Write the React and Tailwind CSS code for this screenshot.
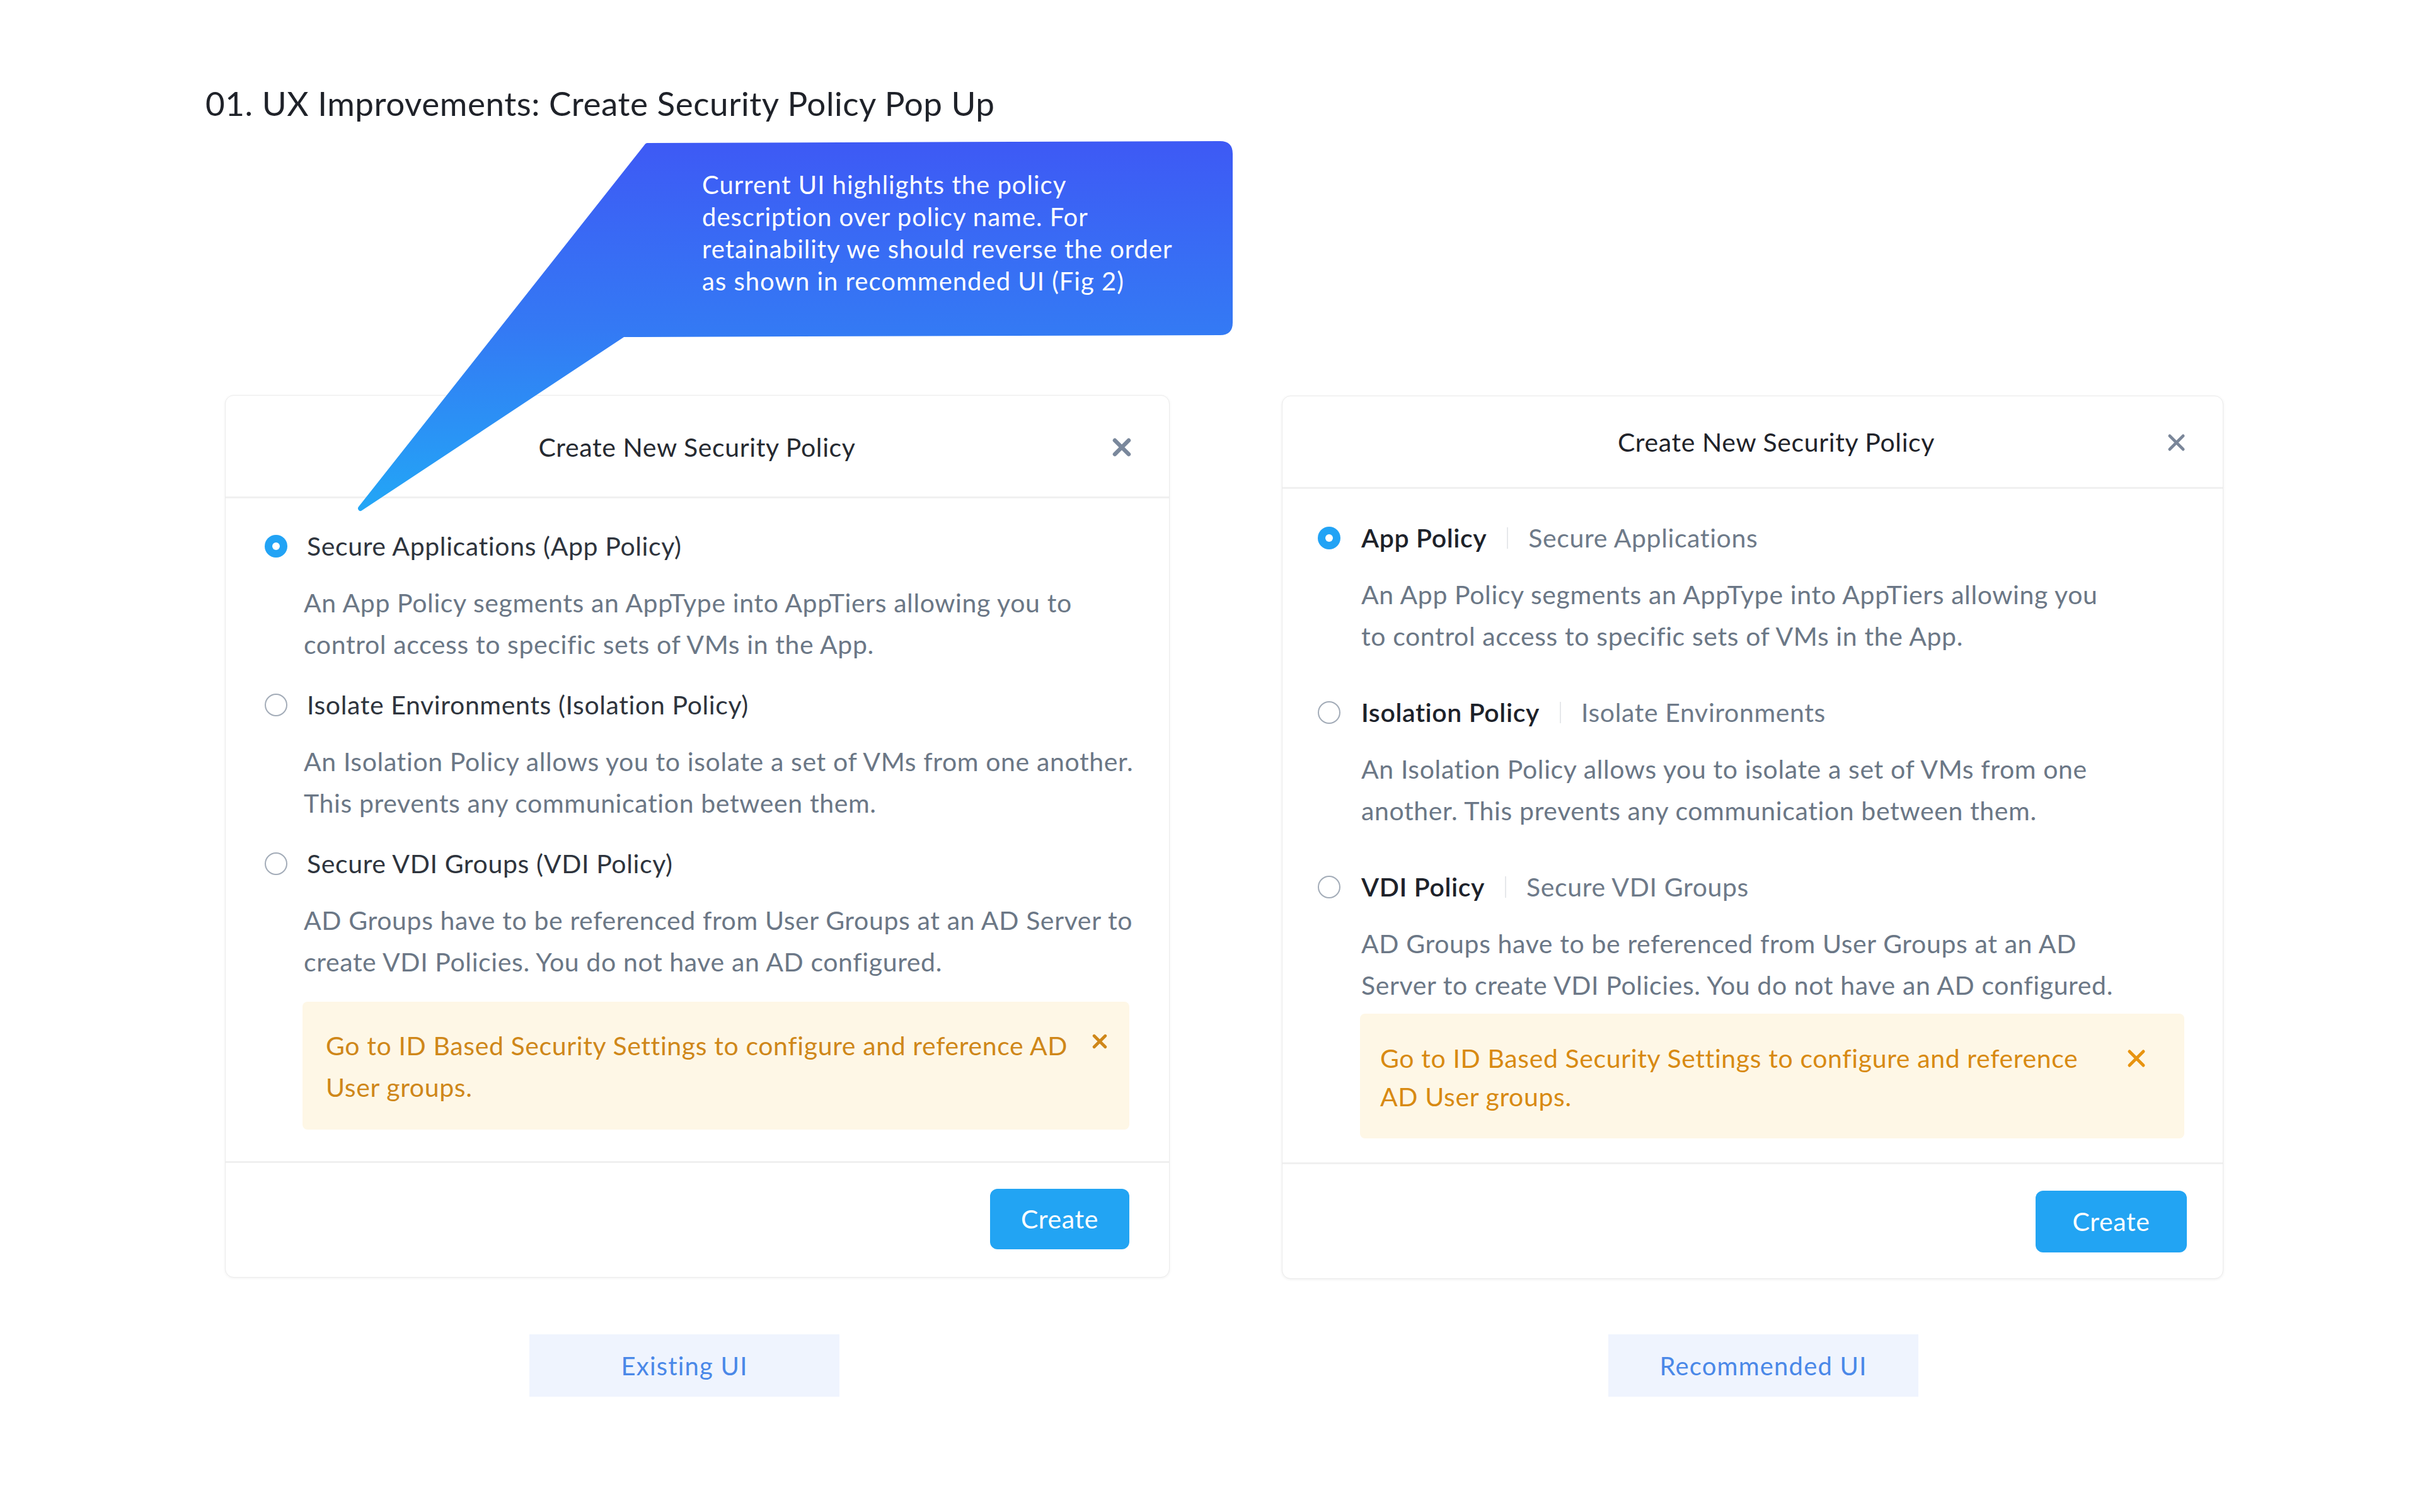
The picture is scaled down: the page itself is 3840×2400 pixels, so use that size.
import React from 'react';

const FONT = { fontFamily: 'Lato, "Open Sans", "Liberation Sans", sans-serif' };

function Radio({ checked }) {
  if (checked) {
    return (
      <span className="w-[36px] h-[36px] shrink-0 rounded-full bg-[#22a3f5] flex items-center justify-center">
        <span className="w-[12px] h-[12px] rounded-full bg-white" />
      </span>
    );
  }
  return <span className="w-[36px] h-[36px] shrink-0 rounded-full border-[2.5px] border-[#a3acb8] bg-white" />;
}

function CloseIcon({ size, stroke, color }) {
  return (
    <svg width={size} height={size} viewBox="0 0 30 30" className="shrink-0">
      <path d="M4 4 L26 26 M26 4 L4 26" stroke={color} strokeWidth={stroke} strokeLinecap="round" fill="none" />
    </svg>
  );
}

function Lines({ lines }) {
  return lines.map((l, i) => (
    <React.Fragment key={i}>
      {l}
      {i < lines.length - 1 && <br />}
    </React.Fragment>
  ));
}

const leftItems = [
  {
    title: 'Secure Applications (App Policy)',
    checked: true,
    desc: [
      'An App Policy segments an AppType into AppTiers allowing you to',
      'control access to specific sets of VMs in the App.',
    ],
  },
  {
    title: 'Isolate Environments (Isolation Policy)',
    desc: [
      'An Isolation Policy allows you to isolate a set of VMs from one another.',
      'This prevents any communication between them.',
    ],
  },
  {
    title: 'Secure VDI Groups (VDI Policy)',
    desc: [
      'AD Groups have to be referenced from User Groups at an AD Server to',
      'create VDI Policies. You do not have an AD configured.',
    ],
  },
];

const rightItems = [
  {
    name: 'App Policy',
    sub: 'Secure Applications',
    checked: true,
    desc: [
      'An App Policy segments an AppType into AppTiers allowing you',
      'to control access to specific sets of VMs in the App.',
    ],
  },
  {
    name: 'Isolation Policy',
    sub: 'Isolate Environments',
    desc: [
      'An Isolation Policy allows you to isolate a set of VMs from one',
      'another. This prevents any communication between them.',
    ],
  },
  {
    name: 'VDI Policy',
    sub: 'Secure VDI Groups',
    desc: [
      'AD Groups have to be referenced from User Groups at an AD',
      'Server to create VDI Policies. You do not have an AD configured.',
    ],
  },
];

function ExistingCard() {
  return (
    <div className="w-[1499px] h-[1401px] bg-white rounded-[14px] border border-[#ebebeb] shadow-[0_1px_4px_rgba(0,0,0,0.06)] flex flex-col">
      {/* Header */}
      <div className="h-[163px] shrink-0 flex items-center px-[60px] pt-[4px] border-b-[3px] border-[#f0f0f0]">
        <div className="w-[29px]" />
        <h2 className="flex-1 text-center text-[41px] tracking-[0.015em] text-[#262a31]">Create New Security Policy</h2>
        <CloseIcon size={30} stroke={6.5} color="#7a889c" />
      </div>

      {/* Body */}
      <div className="flex-1 pt-[43px] pl-[62px] pr-[63px] pb-[48px] flex flex-col">
        {leftItems.map((item, i) => (
          <div key={item.title} className={i > 0 ? 'mt-[30px]' : ''}>
            <div className="flex items-center h-[66px] gap-[31px]">
              <Radio checked={item.checked} />
              <span className="text-[41px] tracking-[0.015em] text-[#2e343d]">{item.title}</span>
            </div>
            <p className="mt-[24px] pl-[62px] text-[41px] tracking-[0.015em] leading-[66px] text-[#6b7786] whitespace-nowrap">
              <Lines lines={item.desc} />
            </p>
          </div>
        ))}

        <div className="mt-[30px] ml-[60px] bg-[#fef7e6] rounded-[8px] pt-[37px] pb-[34px] pl-[37px] pr-[35px] flex items-start">
          <p className="flex-1 text-[41px] tracking-[0.015em] leading-[66px] text-[#cf8719] whitespace-nowrap">
            Go to ID Based Security Settings to configure and reference AD
            <br />
            User groups.
          </p>
          <span className="mt-[14px]">
            <CloseIcon size={24} stroke={6} color="#cf8719" />
          </span>
        </div>
      </div>

      {/* Footer */}
      <div className="border-t-[3px] border-[#f0f0f0] pt-[41px] pb-[44px] pr-[63px] flex justify-end">
        <button className="w-[221px] h-[96px] rounded-[12px] bg-[#22a4f3] text-white text-[41px] tracking-[0.015em]">Create</button>
      </div>
    </div>
  );
}

function RecommendedCard() {
  return (
    <div className="mt-[1px] w-[1494px] h-[1402px] bg-white rounded-[14px] border border-[#ebebeb] shadow-[0_1px_4px_rgba(0,0,0,0.07)] flex flex-col">
      <div className="h-[147px] shrink-0 flex items-center px-[59px] pt-[2px] border-b-[3px] border-[#f0f0f0]">
        <div className="w-[104px]" />
        <h2 className="flex-1 text-center text-[41px] tracking-[0.015em] text-[#1f232a]">Create New Security Policy</h2>
        <CloseIcon size={29} stroke={5} color="#7a8699" />
      </div>

      <div className="flex-1 pt-[45px] pl-[56px] pr-[61px] pb-[37px] flex flex-col">
        {rightItems.map((item, i) => (
          <div key={item.name} className={i > 0 ? 'mt-[55px]' : ''}>
            <div className="flex items-center h-[66px]">
              <Radio checked={item.checked} />
              <span className="ml-[33px] text-[41px] tracking-[0.015em] font-semibold text-[#1d222a]">{item.name}</span>
              <span className="mx-[32px] w-[2px] h-[34px] bg-[#e6e8eb]" />
              <span className="text-[41px] tracking-[0.015em] text-[#6e7a89]">{item.sub}</span>
            </div>
            <p className="mt-[24px] pl-[69px] text-[41px] tracking-[0.015em] leading-[66px] text-[#6b7786] whitespace-nowrap">
              <Lines lines={item.desc} />
            </p>
          </div>
        ))}

        <div className="mt-[12px] ml-[67px] bg-[#fef7e6] rounded-[8px] pt-[40px] pb-[36px] pl-[32px] pr-[61px] flex items-start">
          <p className="flex-1 text-[41px] tracking-[0.015em] leading-[61px] text-[#d88a12] whitespace-nowrap">
            Go to ID Based Security Settings to configure and reference
            <br />
            AD User groups.
          </p>
          <span className="mt-[16px]">
            <CloseIcon size={30} stroke={5} color="#e89410" />
          </span>
        </div>
      </div>

      <div className="border-t-[3px] border-[#f0f0f0] pt-[42px] pb-[41px] pr-[57px] flex justify-end">
        <button className="w-[240px] h-[98px] rounded-[12px] bg-[#22a4f3] text-white text-[41px] tracking-[0.015em]">Create</button>
      </div>
    </div>
  );
}

function Callout() {
  return (
    <>
      <svg
        className="absolute left-[560px] top-[220px] pointer-events-none"
        width="1400"
        height="600"
        viewBox="0 0 1400 600"
      >
        <defs>
          <linearGradient id="bubble" x1="0" y1="0" x2="0" y2="600" gradientUnits="userSpaceOnUse">
            <stop offset="0" stopColor="#3e59f5" />
            <stop offset="0.5" stopColor="#3479f4" />
            <stop offset="1" stopColor="#22a8f6" />
          </linearGradient>
        </defs>
        <path
          d="M467 11 L1376 8 Q1392 8 1392 24 L1392 292 Q1392 308 1376 308 L429 311 L12 587 Z"
          fill="url(#bubble)"
          stroke="url(#bubble)"
          strokeWidth="8"
          strokeLinejoin="round"
        />
      </svg>
      <p className="absolute left-[1114px] top-[268px] text-[40px] tracking-[0.025em] leading-[51px] text-white whitespace-nowrap">
        Current UI highlights the policy
        <br />
        description over policy name. For
        <br />
        retainability we should reverse the order
        <br />
        as shown in recommended UI (Fig 2)
      </p>
    </>
  );
}

export default function App() {
  return (
    <div className="relative w-[3840px] h-[2400px] bg-white overflow-hidden" style={FONT}>
      <h1 className="pl-[326px] pt-[134px] text-[53px] tracking-[0.01em] leading-[60px] text-[#1f2229]">
        01. UX Improvements: Create Security Policy Pop Up
      </h1>

      <div className="mt-[433px] pl-[357px] flex items-start gap-[178px]">
        <ExistingCard />
        <RecommendedCard />
      </div>

      <div className="mt-[88px] pl-[840px] flex gap-[1220px]">
        <div className="w-[492px] h-[99px] bg-[#eff4fe] flex items-center justify-center text-[40px] tracking-[0.03em] text-[#4a88e8]">
          Existing UI
        </div>
        <div className="w-[492px] h-[99px] bg-[#eff4fe] flex items-center justify-center text-[40px] tracking-[0.03em] text-[#4a88e8]">
          Recommended UI
        </div>
      </div>

      <Callout />
    </div>
  );
}
